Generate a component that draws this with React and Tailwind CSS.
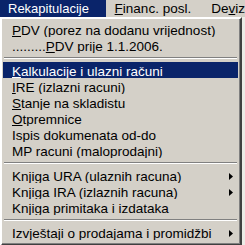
import React from "react";

const Arrow = () => (
  <svg width="4" height="7" viewBox="0 0 4 7" className="absolute right-[5px] top-[6px]">
    <path d="M0 0 L4 3.5 L0 7 Z" fill="#000" />
  </svg>
);

function Item({ children, active, sub }) {
  return (
    <div
      className={
        "relative h-[16px] overflow-hidden pl-[9px] pt-[2px] leading-[16px] whitespace-nowrap " +
        (active ? "bg-[#0a246a] text-white" : "text-black")
      }
    >
      {children}
      {sub && <Arrow />}
    </div>
  );
}

const U = ({ children }) => (
  <span className="underline decoration-1 underline-offset-[1px]">{children}</span>
);

function Sep() {
  return (
    <div className="h-[9px] flex flex-col justify-center px-[1px]">
      <div className="h-px bg-[#808080]" />
      <div className="h-px bg-white" />
    </div>
  );
}

export default function App() {
  return (
    <div
      className="w-[245px] h-[245px] overflow-hidden bg-[#ecebe6] text-[13.5px]"
      style={{ fontFamily: '"Liberation Sans", Arial, sans-serif' }}
    >
      <div className="h-[17px] bg-[#d4d0c8] flex items-center leading-[17px] whitespace-nowrap">
        <div className="w-[108px] h-full bg-[#0a246a] text-white pl-[8px] text-[13px]">Rekapitulacije</div>
        <div className="pl-[9px] w-[108px]">
          <U>F</U>inanc. posl.
        </div>
        <div>
          De<U>v</U>iz
        </div>
      </div>
      <div className="w-[242px] border-2 border-t-white border-l-white border-r-[#404040] border-b-[#404040]">
        <div className="bg-[#d4d0c8] px-[1px] pt-[2px] pb-[3px] border-r border-b border-r-[#808080] border-b-[#808080]">
          <Item>
            <U>P</U>DV (porez na dodanu vrijednost)
          </Item>
          <Item>
            .........<U>P</U>DV prije 1.1.2006.
          </Item>
          <Sep />
          <Item active>
            <U>K</U>alkulacije i ulazni računi
          </Item>
          <Item>
            <U>I</U>RE (izlazni racuni)
          </Item>
          <Item>
            <U>S</U>tanje na skladistu
          </Item>
          <Item>
            <U>O</U>tpremnice
          </Item>
          <Item>Ispis dokumenata od-do</Item>
          <Item>MP racuni (maloprodajni)</Item>
          <Sep />
          <Item sub>Knjiga URA (ulaznih racuna)</Item>
          <Item sub>Knjiga IRA (izlaznih racuna)</Item>
          <Item>Knjiga primitaka i izdataka</Item>
          <Sep />
          <Item sub>Izvještaji o prodajama i promidžbi</Item>
        </div>
      </div>
    </div>
  );
}
